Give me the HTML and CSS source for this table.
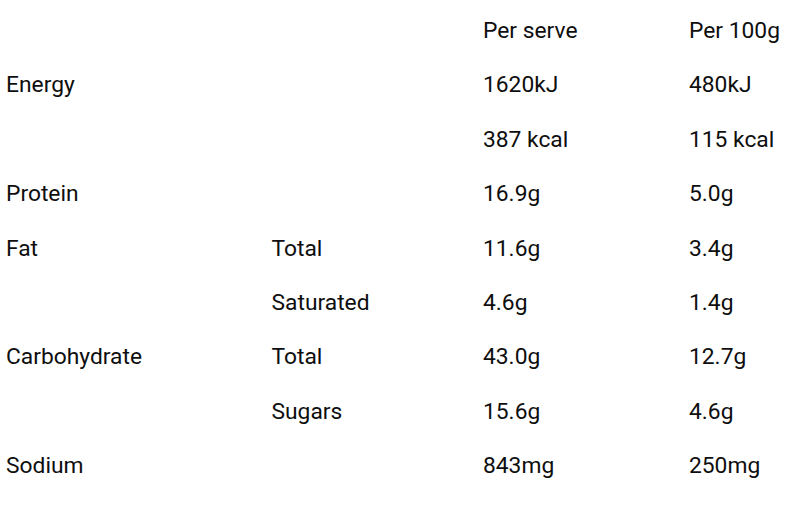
FILE: index.html
```html
<!DOCTYPE html>
<html lang="en">
<head>
<meta charset="utf-8">
<title>Nutrition information</title>
<link rel="stylesheet" href="styles.css">
</head>
<body>
<table class="nutrition">
  <colgroup>
    <col class="c-name">
    <col class="c-sub">
    <col class="c-serve">
    <col class="c-100">
  </colgroup>
  <thead>
    <tr><th></th><th></th><th>Per serve</th><th>Per 100g</th></tr>
  </thead>
  <tbody>
    <tr><td>Energy</td><td></td><td>1620kJ</td><td>480kJ</td></tr>
    <tr><td></td><td></td><td>387 kcal</td><td>115 kcal</td></tr>
    <tr><td>Protein</td><td></td><td>16.9g</td><td>5.0g</td></tr>
    <tr><td>Fat</td><td>Total</td><td>11.6g</td><td>3.4g</td></tr>
    <tr><td></td><td>Saturated</td><td>4.6g</td><td>1.4g</td></tr>
    <tr><td>Carbohydrate</td><td>Total</td><td>43.0g</td><td>12.7g</td></tr>
    <tr><td></td><td>Sugars</td><td>15.6g</td><td>4.6g</td></tr>
    <tr><td>Sodium</td><td></td><td>843mg</td><td>250mg</td></tr>
  </tbody>
</table>
</body>
</html>
```
FILE: styles.css
```css
html, body {
  margin: 0;
  padding: 0;
  background: #ffffff;
}
body {
  padding: 3.3px 0 0 6px;
  font-family: Roboto, "Liberation Sans", sans-serif;
  font-size: 22.8px;
  color: #0e0e0e;
  overflow: hidden;
}
.nutrition {
  border-collapse: collapse;
  border-spacing: 0;
  table-layout: fixed;
  width: 683px;
}
.c-name { width: 265.5px; }
.c-sub { width: 211.5px; }
.c-serve { width: 206px; }
.c-100 { width: 100px; }
.nutrition th,
.nutrition td {
  padding: 0;
  height: 54.4px;
  text-align: left;
  vertical-align: middle;
  font-weight: 400;
  white-space: nowrap;
  line-height: normal;
}
```
